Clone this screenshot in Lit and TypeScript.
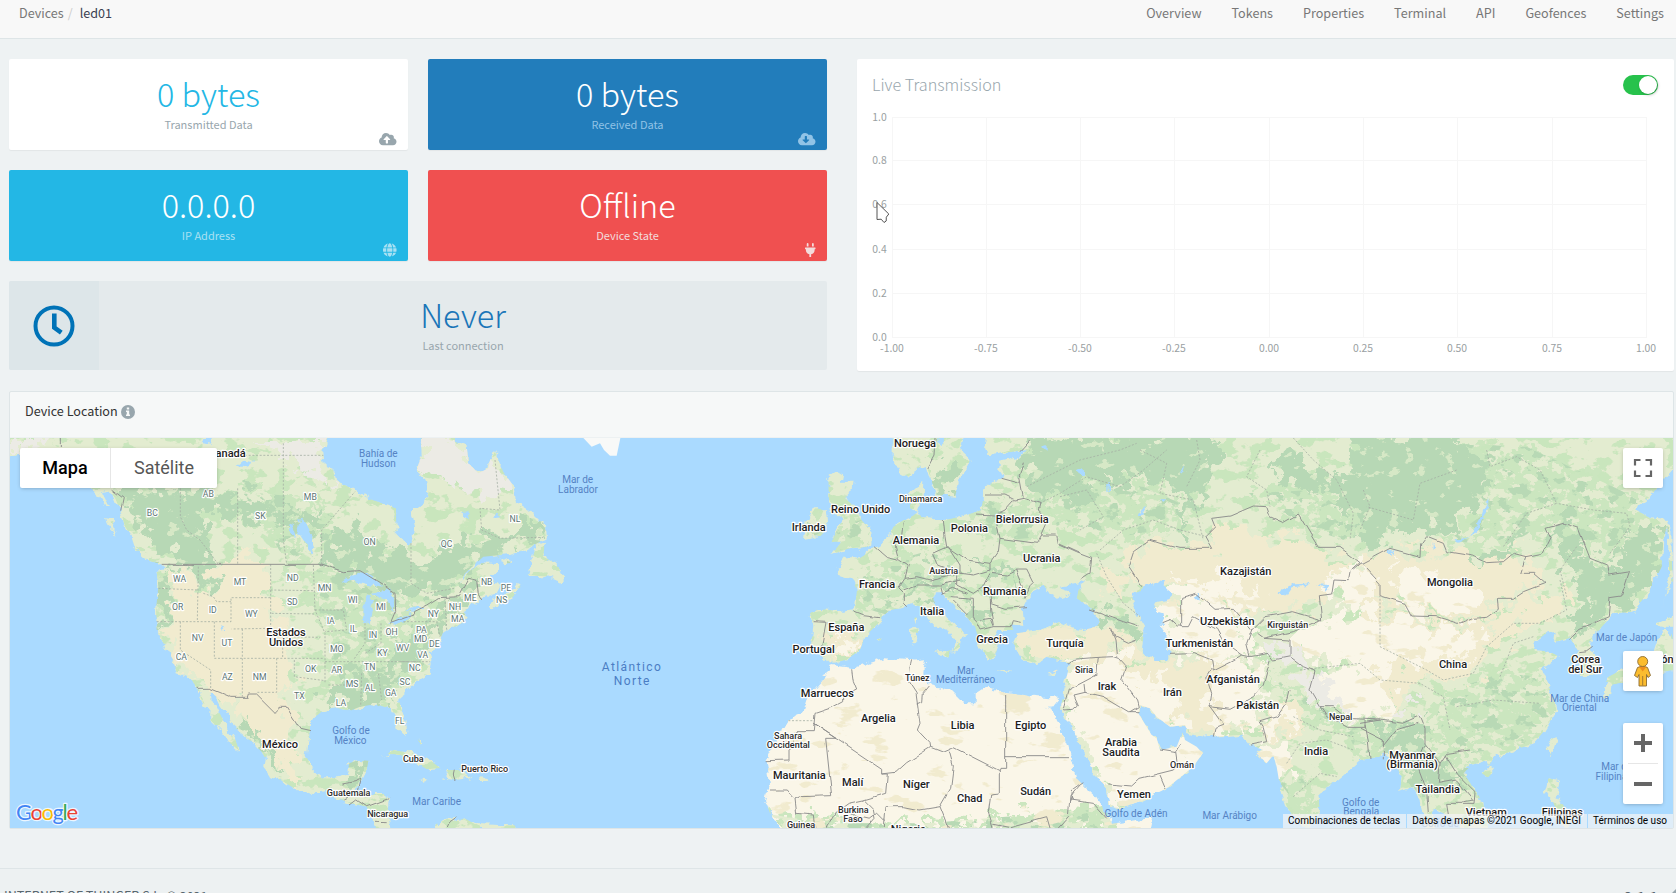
import { LitElement, html, svg, css } from 'lit';
import { customElement } from 'lit/decorators.js';

type Seg = [number, string];

/** Joins survey strips into one closed outline; each strip carries its own x origin. */
const outline = (...segs: Seg[]) =>
  segs
    .map(([dx, pts]) =>
      pts
        .trim()
        .split(/\s+/)
        .map((p) => {
          const [x, y] = p.split(',').map(Number);
          return `${x + dx},${y}`;
        })
        .join(' '),
    )
    .join(' ');

const A = 0, B = 1200, C = 2280, D = 3180, E = 4080;

const land: string[] = [
  // North and Central America
  outline(
    [A, `20,0 20,80 60,75 150,110 240,150 275,176 300,190 330,185 345,205 362,245 375,290 395,320 405,350 440,375 487,400 497,420 470,425 475,470 468,540 470,600 495,650 520,690 530,730 575,750 590,775 600,800 615,830 630,850 640,860 630,870 655,895 680,920 690,940 718,962 705,925 680,890 665,860 650,830 635,810 630,785 650,800 665,830 690,860 700,890 730,915 760,940 785,965 795,985 790,1010 810,1035 850,1055 890,1080 945,1090 975,1082 1010,1105 1050,1120 1100,1130 1110,1160 1130,1200 1172,1200 1165,1150 1170,1105 1150,1092 1100,1092 1065,1090 1080,1060 1100,1020 1105,992 1075,990 1048,1000 1040,1035 1000,1045 965,1045 940,1020 920,980 925,940 930,900 930,875 965,845 1010,835 1050,842 1080,830 1110,825 1150,830 1175,835 1185,870 1190,895 1215,920 1222,905 1215,865 1200,825 1202,795`],
    [B, `40,760 90,730 95,705 90,670 115,640 130,605 190,580 200,560 190,545 215,530 245,505 290,490 300,470 270,440 290,420 292,402 245,400 205,425 178,465 195,430 250,380 330,372 385,355 438,325 435,285 400,250 345,215 335,160 310,125 285,65 270,90 265,115 235,130 205,100 200,45 165,35 165,0 60,0 65,75 50,120 75,145 85,190 65,225 35,245 45,290 40,330 25,345`],
    [A, `1190,310 1188,235 1120,210 1065,180 1005,150 1000,120 975,110 970,70 985,24 985,0`],
  ),
  outline([B, '435,335 410,345 380,435 440,440 485,460 490,440 470,400 430,380']),
  outline([B, '262,535 275,510 330,490 355,460 365,465 340,500 300,520 275,538']),
  outline([B, '290,378 335,398 320,400']),
  outline([B, '-55,980 -20,960 40,970 90,990 122,1015 80,1018 50,1000 0,975 -30,972']),
  outline([B, '120,1045 150,1045 140,1020 175,1020 218,1040 180,1048 165,1050']),
  outline([B, '55,1045 85,1048 70,1055']),
  outline([B, '243,1045 265,1047 260,1053 243,1053']),
  outline([B, '52,925 65,940 60,945']),
  outline([B, '98,1200 110,1180 145,1165 172,1157 165,1172 195,1165 225,1182 300,1185 345,1186 350,1200']),
  outline([A, '400,353 430,365 485,398 480,405 435,388']),
  outline([A, '318,262 340,265 338,285 350,314 325,290']),
  outline([A, '280,175 310,195 330,235 315,225']),
  // Scandinavia and the islands of Europe
  outline([C, '398,0 398,75 415,125 445,140 475,115 500,108 510,140 530,195 585,200 600,140 632,90 600,60 612,0']),
  outline([C, '205,145 235,125 250,130 245,155 275,155 270,190 255,205 285,230 305,270 335,305 330,350 270,355 215,372 245,335 215,335 235,290 250,270 215,245 205,200']),
  outline([C, '135,330 140,270 165,235 200,235 205,290 180,320']),
  outline([C, '525,665 570,660 565,690']),
  outline([C, '450,600 475,595 470,640 455,640']),
  outline([C, '460,565 470,560 465,585']),
  outline([C, '712,718 755,722 740,727']),
  outline([C, '862,732 892,718 880,735']),
  outline([C, '350,628 365,625 360,632']),
  // Eurasia
  outline(
    [C, `680,0 672,60 690,75 760,65 800,60 780,80 720,95 715,120 730,145 700,150 670,180 668,210 665,240 620,255 555,270 510,262 485,262 478,250 450,235 450,190 490,155 488,200 470,250 430,270 400,290 380,330 340,355 300,385 255,385 230,415 235,430 275,445 290,480 285,540 250,545 170,535 150,550 160,590 150,660 180,670 210,700 260,690 300,660 315,620 360,575 365,560 395,540 430,530 450,520 480,530 520,580 570,605 595,640 575,665 600,650 605,620 625,615 590,590 555,560 520,510 525,490 545,490 575,520 620,560 645,590 660,650 690,690 705,680 715,650 700,630 715,600 760,600 755,580 790,585 785,540 800,510 820,480 850,465 870,490 905,510 935,490 905,480 900,470 960,460`],
    [D, `60,450 75,455 55,480 50,505 100,545 120,575 110,590 70,600 0,592`],
    [C, `940,595 900,575 840,600 770,610 760,640 790,690 830,700 860,680 920,695 925,720 910,780 903,840 915,865 960,940`],
    [D, `95,1020 140,1075 148,1130 180,1135 250,1110 320,1075 400,1010 428,970 410,950 375,930 368,905 350,950 300,960 290,925 275,915 235,850 240,825 270,835 290,860 330,890 375,885 385,910 460,920 545,915 570,945 610,960 590,970 620,1000 640,975 650,1010 660,1070 680,1130 720,1190 750,1190 780,1140 775,1090 830,1050 900,990 960,980`],
    [E, `70,965 90,985 125,1040 120,1085 160,1070 185,1110 195,1200 230,1200 215,1150 222,1135 250,1150 290,1170 310,1200 385,1200 370,1120 345,1080 310,1030 335,1005 380,990 385,1012 400,985 450,965 520,940 550,905 590,840 575,790 545,720 600,680 570,665 525,660 520,640 560,610 590,605 585,635 630,625 655,660 650,690 660,735 700,735 715,700 700,660 685,640 710,610 760,550 820,545 870,480 905,410 910,330 925,270 870,265 820,235 870,200 945,110 960,0`],
  ),
  outline([E, '922,282 934,285 935,380 940,450 915,500 905,545 928,440']),
  outline([E, '890,580 945,555 945,590 905,590']),
  outline([E, '885,660 895,630 905,600 930,600 945,640 945,720 880,730 800,755 730,770 745,740 800,710 860,700']),
  outline([E, '730,765 758,755 755,790 738,802']),
  outline([E, '575,925 592,922 575,975 560,960']),
  outline([E, '365,1030 390,1012 402,1020 385,1045']),
  outline([E, '565,1045 598,1050 590,1100 618,1135 650,1150 620,1200 600,1170 580,1120 555,1085']),
];

const africa = outline(
  [C, `895,803 870,835 890,870 920,940 945,1040 965,1060 1010,1100 1040,1150 1055,1182 1180,1162 1172,1200 70,1200 30,1150 15,1110 30,1060 20,990 50,920 80,870 130,850 145,800 190,750 215,705 280,715 370,685 450,690 495,685 490,730 505,765 570,780 610,820 650,820 650,790 680,770 740,790 850,800`],
);

const beige: string[] = [
  outline([A, '490,420 560,410 590,480 640,500 670,400 720,350 800,400 815,560 880,600 850,690 880,740 850,800 880,870 860,960 900,1050 860,1040 780,920 700,820 640,790 590,770 530,700 510,600 520,500']),
  outline([A, '530,470 575,450 580,560 530,560']),
  outline([D, '220,360 300,335 370,355 450,355 460,290 540,290 640,330 740,330 800,370 870,400 860,450 800,470 780,520 700,540 560,550 430,480 350,480 240,470 200,410']),
  outline([E, '0,390 90,350 170,375 260,350 340,375 400,395 470,370 540,430 520,470 440,490 380,560 250,570 150,540 60,500 0,440']),
  outline([C, '210,590 300,600 310,650 250,690 200,680']),
  outline([C, '770,620 900,590 1080,605 1060,680 920,690 800,680']),
  outline([D, '170,650 330,700 450,690 620,690 600,780 480,850 480,910 380,900 290,850 230,800']),
  outline([D, '140,420 200,430 190,520 150,500']),
  outline([E, '0,500 150,560 300,590 400,560 470,510 600,490 620,540 500,590 380,680 330,760 180,740 100,830 0,830']),
  outline([D, '600,850 700,800 740,900 650,930 600,920']),
];

const cream: string[] = [
  africa,
  outline([C, '920,700 1100,670 1130,780 1220,850 1240,920 1400,985 1580,950 1600,1010 1400,1110 1060,1130 1000,1010 905,850']),
  outline([D, '200,720 330,740 380,860 330,880 260,820']),
  outline([D, '280,515 440,470 520,540 590,610 540,680 450,690 340,670 310,600']),
  outline([D, '350,460 480,440 620,500 600,540 450,490']),
  outline([D, '460,700 620,690 600,800 560,910 490,900 450,820']),
  outline([D, '690,610 800,570 900,560 1000,560 1060,640 980,700 800,690 700,650']),
  outline([D, '790,740 900,700 960,720 1000,860 850,860 760,800']),
  outline([E, '100,410 200,440 350,470 370,540 250,560 130,530']),
  outline([E, '-20,540 130,570 260,600 380,600 330,680 180,680 60,720 60,830 -20,860']),
  outline([D, '800,440 900,400 960,460 940,520 830,520']),
  outline([D, '620,860 690,840 700,890 620,920']),
  outline([C, '225,640 280,610 295,650 250,680']),
];

const dark: string[] = [
  outline([A, '330,175 520,175 560,290 640,370 660,440 630,490 600,460 570,410 500,380 430,310 390,250']),
  outline([A, '520,175 640,195 720,190 850,230 960,260 940,300 860,280 760,270 630,255 600,330 550,270']),
  outline([A, '965,370 1000,310 1060,290 1120,355 1200,360 1250,400'], [B, '100,370 200,330 320,320 400,265 432,290 430,320 330,365 250,378 180,440 160,480 80,490 0,520 -80,450 -130,425 -235,400']),
  outline([A, '475,430 515,400 520,470 500,570 490,640 472,600']),
  outline([A, '1130,720 1180,660 1240,610'], [B, '110,560 210,470 235,500 190,540 110,600 60,680 -30,760']),
  outline([A, '965,790 1050,730 1150,740 1180,820 1060,830 1010,820 970,820']),
  outline([A, '1045,1000 1100,992 1080,1050 1040,1050']),
  outline([A, '720,850 760,890 850,1030 830,1035 760,930']),
  outline([C, '505,120 590,100 600,140 580,198 535,190']),
  outline([C, '790,100 820,30 900,10 1360,10 1370,90 1350,150 1310,190 1285,330 1270,300 1275,190 1180,150 1100,150 1040,130 960,230 880,190 830,200 800,170']),
  outline([D, '640,100 700,60 760,110 820,140 900,120 960,10 990,330 900,340 880,260 800,190 700,170 650,140']),
  outline([E, '-20,10 250,10 330,60 390,130 365,200 280,300 200,290 120,310 60,270 -20,350']),
  outline([E, '560,300 640,280 680,380 740,430 810,420 790,490 700,590 650,620 640,560 690,500 640,460 600,380']),
  outline([E, '750,380 820,290 900,280 905,400 860,480 770,550 750,500 810,430']),
  outline([E, '340,390 420,370 460,350 440,390 380,405']),
  outline([E, '20,880 130,880 190,860 200,950 270,1000 340,1080 290,1050 220,1080 180,1100 110,960']),
  outline([C, '440,470 500,450 590,440 590,465 490,480 430,500']),
  outline([C, '610,400 690,400 770,430 760,500 740,440 690,420']),
  outline([C, '580,500 700,540 690,590 640,560']),
  outline([D, '90,540 200,570 240,600 240,640 150,590']),
];

const mid: string[] = [
  outline([A, '650,180 900,200 1000,260 960,300 860,330 940,380 860,400 820,330 700,260']),
  outline([A, '950,420 1100,440 1260,560'], [B, '80,600 0,780 -150,820 -200,700 -240,560']),
  outline([C, '215,290 305,270 335,310 320,350 220,360 240,320']),
  outline([C, '140,270 190,260 195,300 150,325']),
  outline([C, '370,400 480,370 560,360 500,440 440,480 400,560 300,530 310,430']),
  outline([C, '620,280 700,200 820,210 850,320 740,330']),
  outline([C, '10,1150 200,1180 500,1180 860,1150 1080,1120 1060,1200 40,1200']),
  outline([D, '-60,200 100,150 250,170 360,220 350,290 180,320 60,290 0,300']),
  outline([D, '560,190 760,180 880,260 880,340 760,300']),
  outline([E, '250,40 500,50 780,180 850,220 880,300 700,370 600,260 430,350 260,330 390,240']),
  outline([E, '250,790 420,730 540,740 585,800 570,870 500,940 330,970 210,930']),
  outline([D, '630,720 720,790 900,900 1040,930 900,990 850,880 720,860']),
  outline([D, '660,1060 700,1010 760,1080 740,1160']),
  outline([E, '180,960 330,1000 360,1110 300,1080 200,1110']),
];

const pale: string[] = [
  outline([A, '745,24 985,24 970,110 1005,170 930,150 850,80']),
  outline([B, '60,24 165,24 210,100 290,80 335,180 220,200 130,140 60,120']),
  outline([A, '30,24 180,24 120,50 30,50']),
  outline([D, '620,640 700,650 780,740 820,800 900,860 840,850 760,800 700,710 630,690']),
  outline([E, '100,830 150,820 160,840 80,860']),
];

const lakes: string[] = [
  outline([A, '1020,460 1075,425 1110,435 1152,470 1100,462 1060,452']),
  outline([A, '1095,500 1112,490 1115,540 1110,580 1092,575']),
  outline([A, '1115,485 1170,478 1188,520 1183,550 1165,520']),
  outline([A, '1170,580 1200,555 1242,550 1225,567 1185,584']),
  outline([A, '1212,543 1255,528 1270,535 1240,545']),
  outline([A, '900,270 925,290 945,350 935,370 910,330 890,300']),
  outline([A, '860,280 875,285 890,325 870,310']),
  outline([A, '730,92 760,96 730,112 710,108']),
  outline([A, '610,24 640,24 635,44 605,40']),
  outline([A, '663,585 673,598 668,602']),
  outline([B, '190,250 205,245 210,265 198,265']),
  outline([B, '275,265 290,250 305,265 285,268']),
  outline([C, '862,832 900,860 945,940 975,1000 990,1060 1035,1140 1050,1140 1040,1078 995,1020 960,940 920,870 900,835 893,862']),
  outline([D, '215,500 240,480 290,455 315,460 320,480 345,490 330,505 280,515 290,545 305,550 310,600 325,620 325,690 290,690 245,665 250,620 255,590 225,540']),
  outline([D, '405,500 415,480 420,515']),
  outline([D, '665,490 680,465 750,460 740,468 695,472 675,500']),
  outline([D, '765,463 805,465 808,480']),
  outline([D, '50,120 70,115 75,135 60,135']),
  outline([D, '145,160 150,160 150,185 145,185']),
  outline([D, '235,260 255,228 262,230 242,262']),
  outline([D, '300,208 325,208 315,216']),
  outline([D, '360,122 375,110 370,125']),
  outline([E, '285,330 330,320 365,255 380,210 378,250 340,315 300,335']),
  outline([E, '85,362 102,365 92,378']),
  outline([E, '222,338 226,355 220,360']),
  outline([C, '525,30 535,24 560,24 545,45']),
  outline([C, '842,50 860,45 860,62']),
  outline([E, '385,205 378,215 385,225']),
];

const borders: string[] = [
  outline([A, '485,403 965,403 1030,425 1080,422 1150,465 1185,490 1187,545 1172,580 1242,555'], [B, '40,545 80,525 115,503 175,500 205,445 230,450 235,490 245,510']),
  outline([A, '590,775 630,775 695,802 742,802 745,792 770,792 825,847 840,832 858,832 900,898 930,905']),
  outline([A, '335,178 370,205 362,242']),
  outline([A, '181,24 181,54']),
  outline([A, '1030,1062 1065,1055 1082,1045 1070,1090 1030,1110']),
  outline([A, '1050,1125 1070,1110 1100,1130 1168,1105']),
  outline([B, '142,1194 150,1175 172,1160']),
  outline([B, '163,1022 160,1035 165,1050']),
  outline([A, '1125,1177 1160,1178']),
  // Europe
  outline([C, '525,24 522,75 500,115']),
  outline([C, '780,65 812,30']),
  outline([C, '790,95 778,140 790,205 765,210 735,195 675,195']),
  outline([C, '725,145 780,160']),
  outline([C, '790,205 840,220 835,240 865,270 845,315 890,315 895,340 960,370']),
  outline([C, '645,252 705,255 735,240 760,212']),
  outline([C, '705,255 720,325 830,340 845,315']),
  outline([C, '720,325 715,365 690,400 690,420 640,435 600,430 600,405 565,350 520,370 535,405 600,430']),
  outline([C, '550,270 555,320 560,350 620,390 690,400']),
  outline([C, '430,275 425,320 405,345 415,385 445,405 435,445 470,440 510,450 590,430']),
  outline([C, '345,350 380,380 415,388']),
  outline([C, '435,445 415,475 430,490 430,520 440,530']),
  outline([C, '430,480 470,465 540,465 600,450']),
  outline([C, '280,545 310,557 360,563']),
  outline([C, '158,575 198,577 185,650 190,660']),
  outline([C, '590,435 590,465 640,490 670,470 690,430 740,435 770,420 790,470 795,505 810,470 820,460 800,420 770,420']),
  outline([C, '690,520 735,535 798,530']),
  outline([C, '575,500 640,505 640,560 660,600 700,590 755,590 760,575 785,580']),
  outline([C, '540,470 545,490 580,475 620,490']),
  outline([C, '580,510 625,555']),
  outline([C, '660,570 690,565 700,590']),
  outline([C, '690,470 692,540 700,585']),
  // Africa
  outline([C, '275,718 280,755 290,780 248,800 248,815 215,833 165,850 160,905 105,905 100,955 87,962 87,990 20,992']),
  outline([C, '160,880 365,1018 365,1032 385,1032 380,1090 310,1110 265,1120 230,1145']),
  outline([C, '365,1032 408,1027 440,998 512,952 510,940 472,900 480,880 468,790 445,755 452,700 455,688']),
  outline([C, '505,768 487,790 485,815 470,822']),
  outline([C, '512,952 550,967 582,953 718,1022 720,1015 737,1015 737,795']),
  outline([C, '737,980 885,980 930,980']),
  outline([C, '718,1022 718,1092 692,1095 685,1145 700,1194']),
  outline([C, '568,965 580,1010 572,1075 540,1130 480,1140 430,1130 375,1130 370,1194']),
  outline([C, '160,880 228,925 197,925 215,1097 120,1100 105,1107 82,1080 30,1080']),
  outline([C, '105,1107 110,1150 160,1155 165,1194']),
  outline([C, '200,1194 225,1150 240,1145 330,1165 350,1150 375,1175']),
  outline([C, '310,1110 340,1140 345,1165 320,1194']),
  outline([C, '540,1130 565,1194']),
  outline([C, '700,1180 750,1190 860,1160 870,1194']),
  outline([C, '960,1065 930,1100 925,1160 895,1194']),
  outline([D, '30,1110 100,1120 140,1165']),
  outline([D, '70,1055 35,1080 30,1115']),
  // Middle East and Central Asia
  outline([D, '20,700 40,688 115,682 160,680 175,685']),
  outline([D, '115,682 110,735 25,780 8,840 40,838 55,825 42,795 75,787 130,800 205,845 235,845']),
  outline([D, '75,787 72,762']),
  outline([D, '175,685 198,710 185,750 230,810 235,830 210,845']),
  outline([D, '150,590 165,630 170,680']),
  outline([D, '90,540 190,575 235,590']),
  outline([D, '155,592 165,620 205,640 230,630']),
  outline([D, '0,345 50,368 95,385 90,430 60,450']),
  outline([D, '245,470 205,410 220,365 270,330 300,340 360,355 455,355 435,320 465,290 455,265 510,258 580,228 620,230 630,260 670,278 715,252 775,352 840,352 890,390 900,398 870,425 865,452 822,450 815,495 778,500 785,570 700,545 615,560 575,600 520,535 465,538 410,490 365,502 365,590 385,590 400,560 470,598 490,635 545,675']),
  outline([D, '305,575 330,565 355,588 365,588']),
  outline([D, '575,600 560,640 570,680 625,670 640,690 690,680 690,630 610,625 590,610']),
  outline([D, '610,625 700,605 780,570']),
  outline([D, '330,670 400,668 455,690 460,720 520,690 545,675 570,680']),
  outline([D, '455,715 440,740 455,790 450,830 490,885 465,895 460,920']),
  outline([D, '450,830 510,838 580,800 610,765 630,690']),
  outline([D, '690,680 730,710 765,725 750,780 780,830 820,830 865,865 960,870']),
  outline([D, '780,830 800,860 860,892 915,892 915,870']),
  outline([D, '570,945 620,935 610,890 600,875 650,860 680,820 690,780']),
  outline([D, '915,885 925,930 930,985']),
  outline([D, '145,1062 215,1068 240,1045 340,1020 355,1000 350,965 365,940']),
  outline([D, '300,1035 318,1077']),
  outline([D, '300,960 350,968']),
  // East Asia
  outline([E, '5,400 90,355 180,380 182,345 200,320 250,340 260,365 340,378 380,398 430,395 460,370 498,380 482,430 520,430 555,460 490,485 460,505 415,505 418,535 380,562 340,565 300,582 230,560 155,558 135,520 60,497 60,460 5,400']),
  outline([E, '498,380 545,370 570,320 558,295 610,280 655,295 690,385 740,405 745,435 808,425 785,495 750,500 745,560 700,580 660,595 628,625']),
  outline([E, '5,398 -20,420']),
  outline([E, '0,880 60,870 130,880 180,858 195,895 195,940 240,1000 260,970 330,960']),
  outline([E, '240,1000 235,1060 290,1050 340,1110 310,1115']),
  outline([E, '255,975 290,1030 345,1085 342,1120 260,1120 265,1150']),
  outline([E, '0,895 70,930 70,985']),
  outline([E, '70,950 110,900 175,880']),
  outline([E, '195,945 170,1000 200,1080 205,1150']),
  outline([E, '655,668 680,665 698,652']),
];

const dashed: string[] = [
  outline([A, '713,175 713,403']), outline([A, '541,175 541,260 560,300 600,330 655,403']),
  outline([A, '850,40 850,330 860,403']), outline([A, '735,76 970,76']),
  outline([A, '965,403 965,300 1065,185']),
  outline([A, '812,403 812,595 695,597']), outline([A, '812,480 940,482']), outline([A, '815,550 945,552']),
  outline([A, '475,475 595,480']), outline([A, '470,575 693,575 693,503 812,503']),
  outline([A, '595,410 592,570']), outline([A, '541,575 541,660 632,720 632,775']),
  outline([A, '643,575 643,685 973,685']), outline([A, '727,597 727,800']),
  outline([A, '830,685 830,787 770,787']), outline([A, '848,620 848,685']),
  outline([A, '848,620 960,622']), outline([A, '883,690 883,740 975,752']),
  outline([A, '940,405 945,540 975,610 975,760']), outline([A, '945,540 1030,540 1040,600 975,605']),
  outline([A, '975,695 1255,695']), outline([A, '1095,580 1095,640 1060,690']), outline([A, '1143,580 1143,640 1095,670']),
  outline([A, '1085,730 1082,830']), outline([A, '1135,730 1145,810']), outline([A, '985,765 1035,765']),
  outline([A, '610,490 640,500 650,515 693,515']),
  outline([B, '33,340 33,460 80,490 165,475']), outline([B, '285,90 300,240 240,235 245,300 300,325 430,322']),
  outline([B, '10,575 110,575 120,620']), outline([B, '135,505 140,600']), outline([B, '0,695 90,695']),
  outline([C, '85,872 160,872']),
  outline([C, '800,170 880,130 960,90 1080,60 1130,40']), outline([C, '840,220 900,190 980,140 1080,170 1150,120 1220,60']),
  outline([D, '0,200 80,180 130,260 60,300']), outline([D, '240,60 320,100 300,190 400,210 430,330']),
  outline([D, '120,360 190,300 280,270 360,300 440,320']), outline([D, '410,30 420,90 380,170']),
  outline([D, '600,60 560,140 620,180 630,230']), outline([D, '700,24 760,90 830,150 880,250 870,330']),
  outline([D, '110,370 140,440 190,520 240,560']), outline([D, '910,180 930,230 900,300']),
  outline([E, '290,120 180,160 160,270 20,230']), outline([E, '380,60 390,110 470,80 540,120 590,220 500,250 430,350']),
  outline([E, '750,370 810,290 800,250 700,240 590,220']), outline([E, '600,450 620,540 540,580 460,580 380,650 340,730 250,750 200,720 60,650 60,500']),
  outline([E, '-180,720 0,700 60,750 180,760 250,800 270,900']), outline([E, '290,830 400,810 540,820']),
  outline([E, '420,740 460,640 520,620']), outline([E, '650,350 600,420 620,500']),
  outline([D, '680,1000 720,940 800,930 880,960']), outline([D, '700,1100 780,1030 830,1040']), outline([D, '700,860 780,900 880,920']),
];

type Label = [number, number, number, string, string];
const labels: Label[] = [
  [A, 692, 82, 'c', 'anadá'], [A, 858, 619, 'c', 'Estados'], [A, 858, 649, 'c', 'Unidos'], [A, 840, 955, 'c', 'México'],
  [A, 1046, 1098, 'm', 'Guatemala'], [A, 1163, 1161, 'm', 'Nicaragua'],
  [A, 625, 200, 's', 'AB'], [A, 457, 257, 's', 'BC'], [A, 931, 209, 's', 'MB'], [A, 781, 266, 's', 'SK'], [A, 1109, 344, 's', 'ON'],
  [A, 539, 455, 's', 'WA'], [A, 720, 464, 's', 'MT'], [A, 878, 452, 's', 'ND'], [A, 974, 482, 's', 'MN'], [A, 533, 539, 's', 'OR'],
  [A, 638, 548, 's', 'ID'], [A, 754, 560, 's', 'WY'], [A, 877, 524, 's', 'SD'], [A, 1058, 518, 's', 'WI'], [A, 1143, 539, 's', 'MI'],
  [A, 992, 581, 's', 'IA'], [A, 1060, 605, 's', 'IL'], [A, 1119, 623, 's', 'IN'], [A, 1175, 614, 's', 'OH'], [A, 593, 632, 's', 'NV'],
  [A, 681, 647, 's', 'UT'], [A, 1010, 665, 's', 'MO'], [A, 1147, 677, 's', 'KY'], [A, 1208, 662, 's', 'WV'], [A, 544, 689, 's', 'CA'],
  [A, 682, 749, 's', 'AZ'], [A, 779, 749, 's', 'NM'], [A, 932, 725, 's', 'OK'], [A, 1010, 728, 's', 'AR'], [A, 1109, 719, 's', 'TN'],
  [A, 1244, 722, 's', 'NC'], [A, 1056, 770, 's', 'MS'], [A, 1110, 782, 's', 'AL'], [A, 1172, 797, 's', 'GA'], [A, 1215, 764, 's', 'SC'],
  [A, 898, 806, 's', 'TX'], [A, 1023, 827, 's', 'LA'], [A, 1199, 881, 's', 'FL'],
  [B, 140, 350, 's', 'QC'], [B, 345, 275, 's', 'NL'], [B, 260, 464, 's', 'NB'], [B, 318, 482, 's', 'PE'], [B, 305, 518, 's', 'NS'],
  [B, 211, 512, 's', 'ME'], [B, 165, 539, 's', 'NH'], [B, 100, 560, 's', 'NY'], [B, 173, 575, 's', 'MA'], [B, 64, 609, 's', 'PA'],
  [B, 62, 635, 's', 'MD'], [B, 103, 650, 's', 'DE'], [B, 68, 684, 's', 'VA'],
  [B, 40, 996, 'm', 'Cuba'], [B, 254, 1026, 'm', 'Puerto Rico'],
  [A, 1135, 82, 'w', 'Bahía de'], [A, 1135, 112, 'w', 'Hudson'], [A, 1053, 913, 'w', 'Golfo de'], [A, 1051, 943, 'w', 'México'],
  [B, 533, 160, 'w', 'Mar de'], [B, 534, 190, 'w', 'Labrador'], [B, 110, 1126, 'w', 'Mar Caribe'],
  [B, 696, 724, 'o', 'Atlántico'], [B, 697, 766, 'o', 'Norte'],
  [C, 465, 50, 'c', 'Noruega'], [C, 482, 216, 'm', 'Dinamarca'], [C, 302, 250, 'c', 'Reino Unido'], [C, 146, 302, 'c', 'Irlanda'],
  [C, 787, 278, 'c', 'Bielorrusia'], [C, 628, 307, 'c', 'Polonia'], [C, 468, 343, 'c', 'Alemania'], [C, 845, 395, 'c', 'Ucrania'],
  [C, 551, 432, 'm', 'Austria'], [C, 351, 475, 'c', 'Francia'], [C, 734, 494, 'c', 'Rumanía'], [C, 516, 554, 'c', 'Italia'],
  [C, 259, 602, 'c', 'España'], [C, 696, 640, 'c', 'Grecia'], [C, 161, 670, 'c', 'Portugal'], [C, 915, 652, 'c', 'Turquía'],
  [C, 472, 753, 'm', 'Túnez'], [C, 617, 733, 'w', 'Mar'], [C, 617, 759, 'w', 'Mediterráneo'], [C, 202, 802, 'c', 'Marruecos'],
  [C, 355, 875, 'c', 'Argelia'], [C, 608, 896, 'c', 'Libia'], [C, 812, 896, 'c', 'Egipto'], [C, 84, 927, 'm', 'Sahara'],
  [C, 85, 954, 'm', 'Occidental'], [C, 118, 1046, 'c', 'Mauritania'], [C, 278, 1067, 'c', 'Malí'], [C, 469, 1073, 'c', 'Níger'],
  [C, 629, 1117, 'c', 'Chad'], [C, 827, 1094, 'c', 'Sudán'], [C, 280, 1149, 'm', 'Burkina'], [C, 279, 1176, 'm', 'Faso'],
  [C, 123, 1194, 'm', 'Guinea'], [C, 445, 1208, 'c', 'Nigeria'],
  [D, 557, 434, 'c', 'Kazajistán'], [D, 502, 584, 'c', 'Uzbekistán'], [D, 683, 594, 'm', 'Kirguistán'], [D, 418, 652, 'c', 'Turkmenistán'],
  [D, 72, 729, 'm', 'Siria'], [D, 519, 760, 'c', 'Afganistán'], [D, 141, 779, 'c', 'Irak'], [D, 337, 797, 'c', 'Irán'],
  [D, 593, 838, 'c', 'Pakistán'], [D, 842, 869, 'm', 'Nepal'], [D, 183, 947, 'c', 'Arabia'], [D, 183, 977, 'c', 'Saudita'],
  [D, 768, 974, 'c', 'India'], [D, 366, 1014, 'm', 'Omán'], [D, 222, 1103, 'c', 'Yemen'], [D, 228, 1160, 'w', 'Golfo de Adén'],
  [D, 509, 1166, 'w', 'Mar Arábigo'], [D, 902, 1129, 'w', 'Golfo de'], [D, 904, 1156, 'w', 'Bengala'],
  [E, 270, 469, 'c', 'Mongolia'], [E, 279, 715, 'c', 'China'], [E, 677, 700, 'c', 'Corea'], [E, 676, 730, 'c', 'del Sur'],
  [E, 922, 698, 'c', 'ón'], [E, 800, 634, 'w', 'Mar de Japón'], [E, 659, 816, 'w', 'Mar de China'], [E, 658, 843, 'w', 'Oriental'],
  [E, 157, 986, 'c', 'Myanmar'], [E, 156, 1015, 'c', '(Birmania)'], [E, 233, 1090, 'c', 'Tailandia'], [E, 379, 1159, 'c', 'Vietnam'],
  [E, 607, 1159, 'c', 'Filipinas'], [E, 770, 1021, 'w', 'Mar de'], [E, 762, 1051, 'w', 'Filipinas'], [E, 240, 1192, 'w', 'Golfo de'],
];

@customElement('world-map')
export class WorldMap extends LitElement {
  static styles = css`
    :host { display: block; height: 390px; background: #aadaff; overflow: hidden; position: relative; }
    svg { display: block; }
    .canvas { width: 100%; height: 390px; }
    text { font-family: Roboto, sans-serif; text-anchor: middle; paint-order: stroke; stroke-linejoin: round; }
    .c { font-size: 33px; font-weight: 500; fill: #1d1d1d; stroke: #fff; stroke-width: 7px; }
    .m { font-size: 27px; font-weight: 500; fill: #2b2b2b; stroke: #fff; stroke-width: 7px; }
    .s { font-size: 26px; fill: #5c7572; stroke: #fff; stroke-width: 7px; }
    .w { font-size: 30px; fill: #5583c4; }
    .o { font-size: 36px; fill: #4a7dc4; letter-spacing: 4.2px; }
    .line { fill: none; stroke: #8c8c8c; stroke-width: 2.8; }
    .dash { fill: none; stroke: #a5aea3; stroke-width: 2.4; stroke-dasharray: 6 5; }
    .logo { text-anchor: start; font-family: Lato, sans-serif; font-size: 22px; stroke: #fff; stroke-opacity: .8; stroke-width: 2.5px; }
    .control { position: absolute; background: #fff; border-radius: 2px; box-shadow: 0 1px 4px -1px rgba(0,0,0,.3); }
    .types { left: 10px; top: 10px; display: flex; height: 40px; font: 18px/40px Roboto, sans-serif; color: #565656; }
    .types span { text-align: center; width: 106px; }
    .types .on { width: 90px; color: #000; font-weight: 500; border-right: 1px solid #e6e6e6; }
    .full { right: 10px; top: 10px; width: 40px; height: 40px; }
    .man { right: 10px; top: 213px; width: 40px; height: 40px; }
    .zoom { right: 10px; top: 285px; width: 40px; height: 81px; }
    .google { position: absolute; left: 5px; bottom: 0; }
    .legal { position: absolute; right: 0; bottom: 0; height: 14px; display: flex; gap: 1px; font: 10px/13px Roboto, sans-serif; color: #000; }
    .legal span { background: rgba(245,245,245,.7); padding: 0 6px 0 5px; white-space: nowrap; }
  `;

  private shapes(list: string[], fill: string) {
    return list.map((p) => svg`<polygon points=${p} fill=${fill}></polygon>`);
  }

  render() {
    return html`
      <svg class="canvas" viewBox="30 24 4989 1170" preserveAspectRatio="none">
        <defs>
          <filter id="rough" filterUnits="userSpaceOnUse" x="0" y="0" width="5060" height="1210" color-interpolation-filters="sRGB">
            <feTurbulence type="fractalNoise" baseFrequency="0.04" numOctaves="3" seed="4"></feTurbulence>
            <feDisplacementMap in="SourceGraphic" scale="26" xChannelSelector="R" yChannelSelector="G"></feDisplacementMap>
          </filter>
          <filter id="wavy" filterUnits="userSpaceOnUse" x="0" y="0" width="5060" height="1210" color-interpolation-filters="sRGB">
            <feTurbulence type="fractalNoise" baseFrequency="0.025" numOctaves="1" seed="4"></feTurbulence>
            <feDisplacementMap in="SourceGraphic" scale="16" xChannelSelector="R" yChannelSelector="G"></feDisplacementMap>
          </filter>
          <filter id="ragged" filterUnits="userSpaceOnUse" x="0" y="0" width="5060" height="1210" color-interpolation-filters="sRGB">
            <feTurbulence type="fractalNoise" baseFrequency="0.022" numOctaves="4" seed="9"></feTurbulence>
            <feDisplacementMap in="SourceGraphic" scale="150" xChannelSelector="R" yChannelSelector="G"></feDisplacementMap>
          </filter>
          ${[
            ['patchDark', '0.72 0.85 0.71', '0.022 0.03', 21, -11.8],
            ['patchMid', '0.79 0.90 0.74', '0.018 0.026', 5, -10.9],
            ['patchLight', '0.89 0.925 0.815', '0.026 0.034', 13, -10.8],
            ['clearing', '0.84 0.91 0.775', '0.024 0.034', 17, -13.2],
            ['patchBeige', '0.945 0.92 0.81', '0.01 0.022', 31, -12.6],
          ].map(([id, rgb, freq, seed, cut]) => {
            const [r, g, b] = String(rgb).split(' ');
            return svg`
              <filter id=${id} filterUnits="userSpaceOnUse" x="0" y="0" width="5060" height="1210" color-interpolation-filters="sRGB">
                <feTurbulence type="fractalNoise" baseFrequency=${freq} numOctaves="4" seed=${seed}></feTurbulence>
                <feColorMatrix values=${`0 0 0 0 ${r} 0 0 0 0 ${g} 0 0 0 0 ${b} 20 0 0 0 ${cut}`}></feColorMatrix>
                <feComposite in2="SourceAlpha" operator="in"></feComposite>
              </filter>`;
          })}
          <clipPath id="ground">
            ${this.shapes([...land, africa], '#000')}
          </clipPath>
        </defs>
        <g filter="url(#rough)">
          ${this.shapes(land, '#e3ecd0')}
          ${this.shapes([africa], '#faf6e8')}
        </g>
        <g clip-path="url(#ground)">
          <g filter="url(#patchMid)">${this.shapes(land, '#000')}</g>
          <g filter="url(#ragged)">${this.shapes(mid, '#cbe6bf')}</g>
          <g filter="url(#patchLight)">${this.shapes(mid, '#000')}</g>
          <g filter="url(#patchDark)">${this.shapes(mid, '#000')}</g>
          <g filter="url(#ragged)">${this.shapes(beige, '#f1ebcf')}</g>
          <g filter="url(#ragged)">${this.shapes(dark, '#b7d8b5')}</g>
          <g filter="url(#clearing)">${this.shapes(dark, '#000')}</g>
          <g filter="url(#ragged)">${this.shapes(cream.slice(1), '#faf6e8')}</g>
          <g filter="url(#patchBeige)">${this.shapes(cream, '#000')}</g>
          <g filter="url(#ragged)">${this.shapes(pale, '#ecebe5')}</g>
        </g>
        <polygon points=${outline([B, '545,0 550,24 575,50 600,40 612,60 630,77 650,77 662,20 662,0'])} fill="#f8f9f8"></polygon>
        <g filter="url(#rough)">${this.shapes(lakes, '#aadaff')}</g>
        ${dashed.map((p) => svg`<polyline class="dash" points=${p}></polyline>`)}
        <g filter="url(#wavy)">${borders.map((p) => svg`<polyline class="line" points=${p}></polyline>`)}</g>
        ${labels.map(([dx, x, y, kind, name]) => svg`<text class=${kind} x=${dx + x} y=${y}>${name}</text>`)}
      </svg>
      <div class="control types"><span class="on">Mapa</span><span>Satélite</span></div>
      <div class="control full">
        <svg width="40" height="40"><path d="M12 17.500v-5.500h5.500M22.500 12h5.500v5.500M28 22.500v5.500h-5.500M17.500 28h-5.500v-5.500" fill="none" stroke="#666" stroke-width="2.200"></path></svg>
      </div>
      <div class="control man">
        <svg width="40" height="40">
          <path d="M14.500 16.500q5-3 10 0l3 8-2.500 2-1.500-3v11.500h-7.500v-11.500l-1.500 3-3-2z" fill="#fbbc2e" stroke="#8b6c33" stroke-width=".9"></path>
          <path d="M16 15.500h7.500l-3.800 5z" fill="#ee8d1d"></path>
          <path d="M19.700 25v9.500" stroke="#9b7430" stroke-width=".9"></path>
          <circle cx="19.700" cy="10.500" r="5" fill="#fbbc2e" stroke="#8b6c33" stroke-width=".9"></circle>
        </svg>
      </div>
      <div class="control zoom">
        <svg width="40" height="81"><path d="M11 20h18M20 11v18M11 61h18" stroke="#666" stroke-width="4"></path><path d="M5 40.500h30" stroke="#e6e6e6"></path></svg>
      </div>
      <svg class="google" width="70" height="28">
        <text class="logo" x="1" y="20" textLength="62"><tspan fill="#4285f4">G</tspan><tspan fill="#ea4335">o</tspan><tspan fill="#fbbc05">o</tspan><tspan fill="#4285f4">g</tspan><tspan fill="#34a853">l</tspan><tspan fill="#ea4335">e</tspan></text>
      </svg>
      <div class="legal"><span>Combinaciones de teclas</span><span>Datos de mapas ©2021 Google, INEGI</span><span>Términos de uso</span></div>
    `;
  }
}

const icons: Record<string, unknown> = {
  up: svg`<path d="M537.600 226.600c4.100-10.700 6.400-22.400 6.400-34.600 0-53-43-96-96-96-19.700 0-38.100 6-53.300 16.200C367 64.200 315.300 32 256 32c-88.400 0-160 71.600-160 160 0 2.700.1 5.400.2 8.100C40.200 219.800 0 273.200 0 336c0 79.500 64.500 144 144 144h368c70.700 0 128-57.300 128-128 0-61.900-44-113.600-102.400-125.400zM393.400 288H328v112c0 8.800-7.200 16-16 16h-48c-8.800 0-16-7.200-16-16V288h-65.400c-14.300 0-21.400-17.200-11.300-27.300l105.400-105.400c6.200-6.200 16.400-6.200 22.600 0l105.400 105.400c10.100 10.100 2.900 27.300-11.300 27.300z"></path>`,
  down: svg`<path d="M537.600 226.600c4.100-10.700 6.400-22.400 6.400-34.600 0-53-43-96-96-96-19.700 0-38.100 6-53.300 16.200C367 64.200 315.300 32 256 32c-88.400 0-160 71.600-160 160 0 2.700.1 5.400.2 8.100C40.200 219.800 0 273.200 0 336c0 79.500 64.500 144 144 144h368c70.700 0 128-57.300 128-128 0-61.900-44-113.600-102.400-125.400zM404.700 299.300L299.300 404.700c-6.200 6.200-16.400 6.200-22.600 0L171.300 299.300c-10.100-10.100-2.900-27.300 11.300-27.300H248V160c0-8.800 7.200-16 16-16h48c8.800 0 16 7.200 16 16v112h65.400c14.300 0 21.400 17.200 11.300 27.300z"></path>`,
  globe: svg`<path d="M336.500 160C322 70.700 287.800 8 248 8s-74 62.700-88.500 152h177zM152 256c0 22.200 1.200 43.500 3.300 64h185.300c2.100-20.500 3.300-41.800 3.300-64s-1.200-43.500-3.300-64H155.300c-2.100 20.500-3.300 41.800-3.300 64zm324.700-96c-28.600-67.900-86.500-120.400-158-141.600 24.400 33.800 41.200 84.700 50 141.600h108zM177.200 18.400C105.800 39.600 47.800 92.100 19.300 160h108c8.700-56.900 25.500-107.800 49.900-141.600zM487.400 192H372.700c2.100 21 3.300 42.500 3.300 64s-1.200 43-3.300 64h114.600c5.500-20.500 8.600-41.800 8.600-64s-3.100-43.500-8.500-64zM120 256c0-21.500 1.200-43 3.300-64H8.600C3.200 212.500 0 233.800 0 256s3.200 43.500 8.600 64h114.600c-2-21-3.200-42.500-3.200-64zm39.500 96c14.500 89.300 48.700 152 88.500 152s74-62.700 88.500-152h-177zm159.300 141.600c71.400-21.200 129.400-73.700 158-141.600h-108c-8.800 56.900-25.600 107.800-50 141.600zM19.300 352c28.600 67.900 86.500 120.400 158 141.600-24.400-33.800-41.200-84.700-50-141.600h-108z"></path>`,
  plug: svg`<path d="M320 32a32 32 0 0 0-64 0v96h64zm48 128H16a16 16 0 0 0-16 16v32a16 16 0 0 0 16 16h16v32a160 160 0 0 0 128 156.800V512h64v-99.200A160 160 0 0 0 352 256v-32h16a16 16 0 0 0 16-16v-32a16 16 0 0 0-16-16zM128 32a32 32 0 0 0-64 0v96h64z"></path>`,
};

@customElement('stat-card')
export class StatCard extends LitElement {
  static properties = { value: {}, caption: {}, icon: {}, box: {}, tone: { reflect: true } };
  declare value: string;
  declare caption: string;
  declare icon: string;
  declare box: string;
  declare tone: string;

  static styles = css`
    :host { display: flex; flex-direction: column; align-items: center; position: relative; height: 91px; box-sizing: border-box; padding-top: 11px; border-radius: 2px; box-shadow: 0 1px 1px rgba(0,0,0,.05); --dim: #98a6ad; --main: #fff; }
    :host([tone='white']) { background: #fff; --main: #23b7e5; }
    :host([tone='blue']) { background: #227dbb; --dim: #91c3e6; }
    :host([tone='cyan']) { background: #23b7e5; --dim: #a9e1f3; }
    :host([tone='red']) { background: #f05050; --dim: #f3dcdc; }
    .value { font-weight: 200; font-size: 32.4px; line-height: 46px; color: var(--main); white-space: pre; }
    .caption { font-size: 11px; line-height: 16px; color: var(--dim); }
    svg { position: absolute; right: 11.5px; bottom: 4.5px; height: 14px; fill: var(--dim); }
  `;
  render() {
    return html`
      <div class="value">${this.value}</div>
      <div class="caption">${this.caption}</div>
      <svg viewBox=${this.box}>${icons[this.icon]}</svg>
    `;
  }
}

@customElement('app-root')
export class AppRoot extends LitElement {
  static styles = css`
    :host { display: flex; flex-direction: column; height: 893px; overflow: hidden; background: #eef2f3; color: #3a3f51; position: relative; font: 12.6px/20px "Noto Sans CJK SC", "Noto Sans CJK JP", sans-serif; }
    header { box-sizing: border-box; height: 39px; flex: none; display: flex; justify-content: space-between; padding: 3px 12px 0 19px; background: #f8f8f8; border-bottom: 1px solid #dee5e7; }
    .crumbs i { font-style: normal; color: #ccc; padding: 0 7px 0 4px; }
    .crumbs, nav { color: #777; }
    .crumbs b { font-weight: 400; color: #3a3f51; }
    nav { display: flex; gap: 30px; }
    .top { flex: none; display: grid; grid-template-columns: 818px 817px; gap: 30px; padding: 20px 0 0 9px; }
    .stats { display: grid; grid-template-columns: 399px 399px; gap: 20px; align-content: start; }
    .last { grid-column: 1 / 3; height: 89px; display: flex; background: #e4eaec; border-radius: 2px; overflow: hidden; }
    .clock { width: 90px; background: #dde6e9; display: flex; align-items: center; justify-content: center; }
    .when { flex: 1; text-align: center; padding-top: 10px; }
    .never { font-weight: 200; font-size: 32.4px; line-height: 46px; color: #1a76b8; }
    .sub { font-size: 11px; line-height: 16px; color: #98a6ad; }
    .live { background: #fff; border-radius: 2px; height: 312px; box-shadow: 0 1px 1px rgba(0,0,0,.05); }
    .livehead { display: flex; justify-content: space-between; padding: 16px 16px 0 15px; height: 20px; font-weight: 300; font-size: 16.200px; line-height: 18px; color: #98a6ad; }
    .toggle { width: 35px; height: 20px; border-radius: 10px; background: #27c24c; display: flex; justify-content: flex-end; }
    .knob { width: 18px; height: 18px; margin: 1px; border-radius: 50%; background: #fff; box-shadow: 1px 1px 3px rgba(0,0,0,.25); }
    .chart { display: block; }
    .chart text { font-size: 10.400px; fill: #9a9fa2; text-anchor: middle; }
    .chart path { stroke: #f6f6f6; fill: none; }
    .panel { flex: none; margin: 20px 2px 0 9px; border: 1px solid #dee5e7; border-radius: 2px; background: #f6f8f8; }
    .title { height: 46px; box-sizing: border-box; padding: 9px 15px; display: flex; align-items: flex-start; gap: 3px; color: #333; border-bottom: 1px solid #edf1f2; }
    .title svg { margin-top: 4px; }
    footer { margin-top: 39px; flex: none; height: 40px; border-top: 1px solid #dee5e7; background: #edf1f2; display: flex; padding: 17px 0 0 4px; color: #58666e; }
    footer b { margin-left: auto; letter-spacing: .6px; }
    footer svg { margin: 3px 0 0 13px; }
    .cursor { position: absolute; left: 875px; top: 200px; }
  `;

  private chart() {
    const xs = [892.5, 986.5, 1080.5, 1174.5, 1269.5, 1363.5, 1457.5, 1552.5, 1646.5];
    const ys = [117.5, 160.5, 204.5, 249.5, 293.5, 337.5];
    const xt = ['-1.00', '-0.75', '-0.50', '-0.25', '0.00', '0.25', '0.50', '0.75', '1.00'];
    const yt = ['1.0', '0.8', '0.6', '0.4', '0.2', '0.0'];
    return svg`
      ${xs.map((x) => svg`<path d=${`M${x} 117V338`}></path>`)}
      ${ys.map((y) => svg`<path d=${`M892 ${y}H1647`}></path>`)}
      ${xs.map((x, i) => svg`<text x=${x - 0.5} y="352">${xt[i]}</text>`)}
      ${ys.map((y, i) => svg`<text x="879.500" y=${y + 3.5}>${yt[i]}</text>`)}
    `;
  }

  render() {
    return html`
      <header>
        <div class="crumbs">Devices<i>/</i><b>led01</b></div>
        <nav>${['Overview', 'Tokens', 'Properties', 'Terminal', 'API', 'Geofences', 'Settings'].map((t) => html`<span>${t}</span>`)}</nav>
      </header>
      <section class="top">
        <div class="stats">
          <stat-card tone="white" value="0 bytes" caption="Transmitted Data" icon="up" box="0 0 640 512"></stat-card>
          <stat-card tone="blue" value="0 bytes" caption="Received Data" icon="down" box="0 0 640 512"></stat-card>
          <stat-card tone="cyan" value="0.0.0.0" caption="IP Address" icon="globe" box="0 0 496 512"></stat-card>
          <stat-card tone="red" value="Offline" caption="Device State" icon="plug" box="0 0 384 512"></stat-card>
          <div class="last">
            <div class="clock">
              <svg width="42" height="42" viewBox="0 0 42 42" fill="none" stroke="#0073b7"><circle cx="21" cy="21" r="18.500" stroke-width="4"></circle><path d="M21.300 8.500v14l7 5.200" stroke-width="4.600"></path></svg>
            </div>
            <div class="when"><div class="never">Never</div><div class="sub">Last connection</div></div>
          </div>
        </div>
        <div class="live">
          <div class="livehead"><span>Live Transmission</span><div class="toggle"><div class="knob"></div></div></div>
          <svg class="chart" width="817" height="270" viewBox="857 95 817 270">${this.chart()}</svg>
        </div>
      </section>
      <section class="panel">
        <div class="title"><span>Device Location</span>
          <svg width="14" height="14" viewBox="0 0 14 14"><circle cx="7" cy="7" r="7" fill="#98a6ad"></circle><path d="M5.800 2.500h2.400v2H5.800zM5 5.600h3.200v4H9V11H5V9.600h.8V7H5z" fill="#f6f8f8"></path></svg>
        </div>
        <world-map></world-map>
      </section>
      <footer>
        <span>INTERNET OF THINGER S.L. © 2021</span><b>2.1.1</b>
        <svg width="5" height="14" viewBox="0 0 5 14"><path d="M0 5L6-1V12H3V6z" fill="#98a6ad"></path></svg>
      </footer>
      <svg class="cursor" width="18" height="26" viewBox="0 0 18 26"><path d="M2 2.500V19.500l4.200-.3 2.800 3.300 2.200-1.500.1-3.800 2.500-3.200z" fill="#fff" fill-opacity=".85" stroke="#555" stroke-width="1"></path></svg>
    `;
  }
}
